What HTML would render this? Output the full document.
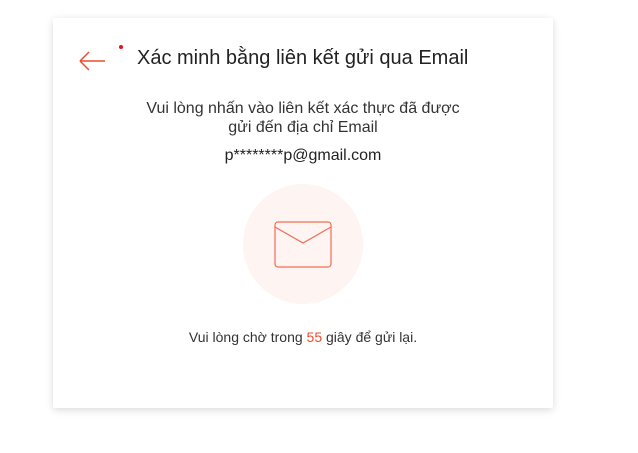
<!DOCTYPE html><html><head><style>
body{margin:0;width:638px;height:453px;background:#fff;font-family:"Liberation Sans",Arial,sans-serif;position:relative;overflow:hidden}
.card{position:absolute;left:53px;top:18px;width:500px;height:390px;background:#fff;box-shadow:0 2px 8px rgba(0,0,0,.15);border-radius:2px}
.t{position:absolute;left:137px;top:47px;font-size:20px;color:#222;white-space:nowrap}
.c{position:absolute;left:53px;width:500px;text-align:center;color:#333}
</style></head><body>
<div class="card"></div>
<svg style="position:absolute;left:78px;top:50px" width="30" height="22"><path d="M2 11H27M2 11L11 2M2 11L11 20" stroke="#ee4d2d" stroke-width="1.5" fill="none"/></svg>
<div style="position:absolute;left:119px;top:45px;width:4px;height:4px;border-radius:50%;background:#e0141e"></div>
<div class="t">Xác minh bằng liên kết gửi qua Email</div>
<div class="c" style="top:99px;font-size:16px;line-height:19px">Vui lòng nhấn vào liên kết xác thực đã được<br>gửi đến địa chỉ Email</div>
<div class="c" style="top:147px;font-size:16px;color:#222">p********p@gmail.com</div>
<div style="position:absolute;left:243px;top:184px;width:120px;height:120px;border-radius:50%;background:#fef4f2"></div>
<svg style="position:absolute;left:274px;top:221px" width="59" height="48"><rect x="1" y="1" width="56" height="45" rx="3" fill="none" stroke="#f26d56" stroke-width="1.2"/><path d="M1 6L29 22L57 6" fill="none" stroke="#f26d56" stroke-width="1.2"/></svg>
<div class="c" style="top:329px;font-size:14px">Vui lòng chờ trong <span style="color:#ee4d2d">55</span> giây để gửi lại.</div>
</body></html>
